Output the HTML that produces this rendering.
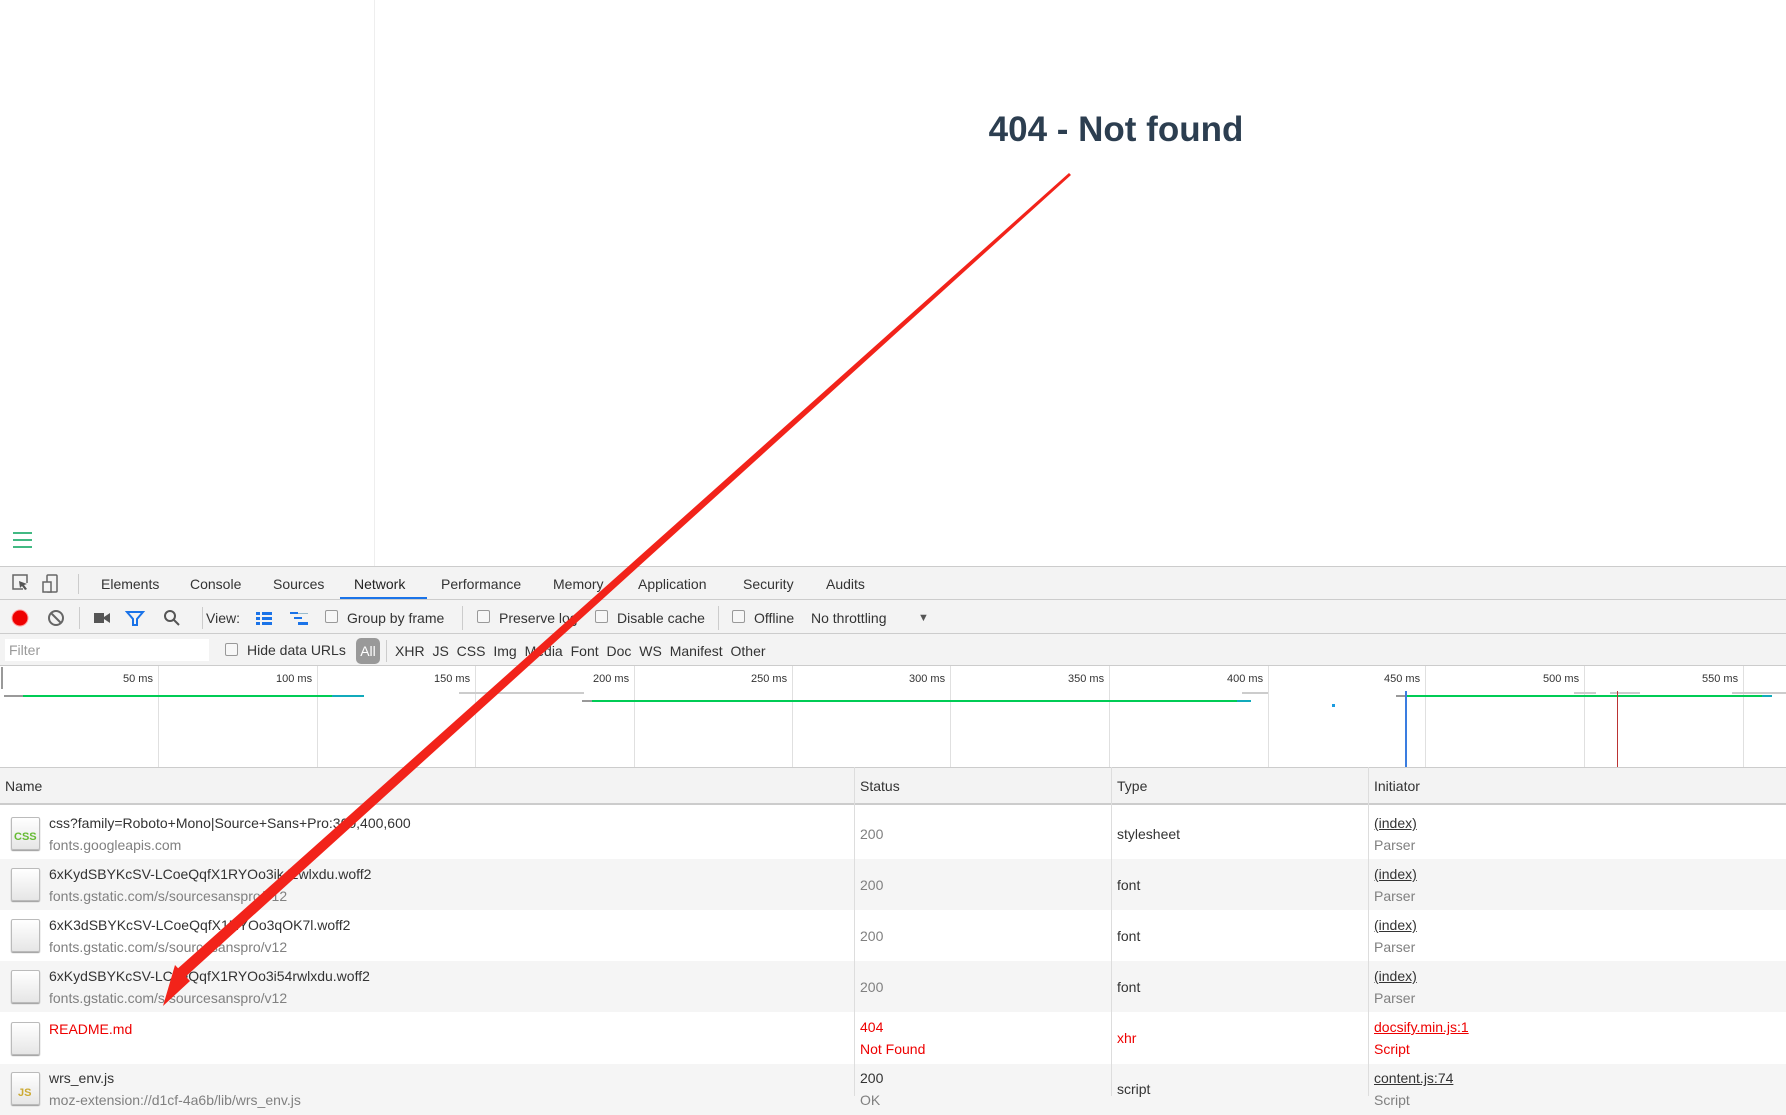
<!DOCTYPE html>
<html><head><meta charset="utf-8"><style>
*{margin:0;padding:0;box-sizing:border-box}
body{width:1786px;height:1096px;overflow:hidden;background:#fff;font-family:"Liberation Sans",sans-serif;position:relative;color:#222}
.a{position:absolute;white-space:nowrap}
.t{font-size:14px;color:#333}
.g{color:#808080}
.r{color:#e00}
.u{text-decoration:underline}
.row{position:absolute;left:0;width:1786px;height:51px}
.ico{position:absolute;left:11px;width:29px;height:33px;border:1px solid #bbb;border-radius:2px;background:linear-gradient(#fff,#e6e6e6);box-shadow:0 1px 1px #999}
.cb{position:absolute;width:13px;height:13px;border:1px solid #999;border-radius:2px;background:#f7f7f7}
.vl{position:absolute;width:1px;background:#e0e0e0}
</style></head><body>
<div class="vl" style="left:374px;top:0;height:566px;background:#eee"></div>
<div class="a" style="left:0;width:2232px;top:110px;font-size:35px;font-weight:bold;color:#2c3e50;text-align:center">404 - Not found</div>
<div class="a" style="left:13px;top:532px;width:19px;height:2px;background:#42b983"></div>
<div class="a" style="left:13px;top:539px;width:19px;height:2px;background:#42b983"></div>
<div class="a" style="left:13px;top:546px;width:19px;height:2px;background:#42b983"></div>

<div class="a" style="left:0;top:566px;width:1786px;height:100px;background:#f3f3f3;border-top:1px solid #ccc"></div>
<div class="a" style="left:0;top:599px;width:1786px;height:1px;background:#ccc"></div>
<div class="a" style="left:0;top:633px;width:1786px;height:1px;background:#ccc"></div>
<div class="a" style="left:0;top:665px;width:1786px;height:1px;background:#ccc"></div>
<svg class="a" style="left:10px;top:572px" width="70" height="24" viewBox="0 0 70 24"><path d="M13 17H3V3h14v8" fill="none" stroke="#666" stroke-width="1.5"/><path d="M9 9l8 3-3 1 3 4-2 1-3-4-2 2z" fill="#555"/><rect x="37" y="3" width="10" height="17" rx="1" fill="none" stroke="#666" stroke-width="1.5"/><rect x="33" y="10" width="8" height="10" fill="#f3f3f3" stroke="#666" stroke-width="1.5"/><rect x="68" y="2" width="1" height="20" fill="#ccc"/></svg>
<div class="a t" style="left:101px;top:576px">Elements</div>
<div class="a t" style="left:190px;top:576px">Console</div>
<div class="a t" style="left:273px;top:576px">Sources</div>
<div class="a t" style="left:354px;top:576px;color:#222">Network</div>
<div class="a" style="left:340px;top:597px;width:87px;height:2px;background:#1a73e8"></div>
<div class="a t" style="left:441px;top:576px">Performance</div>
<div class="a t" style="left:553px;top:576px">Memory</div>
<div class="a t" style="left:638px;top:576px">Application</div>
<div class="a t" style="left:743px;top:576px">Security</div>
<div class="a t" style="left:826px;top:576px">Audits</div>

<svg class="a" style="left:8px;top:605px" width="200" height="26" viewBox="0 0 200 26"><circle cx="12" cy="13" r="8" fill="#e00" stroke="#f99" stroke-width="1"/><circle cx="48" cy="13" r="7" fill="none" stroke="#666" stroke-width="2"/><path d="M43 8l10 10" stroke="#666" stroke-width="2"/><rect x="71" y="2" width="1" height="22" fill="#ccc"/><rect x="86" y="8" width="10" height="10" fill="#555"/><path d="M96 12l6-4v10l-6-4z" fill="#555"/><path d="M119 7h16l-6 7v6h-4v-6z" fill="none" stroke="#1a73e8" stroke-width="2"/><circle cx="162" cy="11" r="5" fill="none" stroke="#555" stroke-width="2"/><path d="M166 15l5 5" stroke="#555" stroke-width="2"/><rect x="194" y="2" width="1" height="22" fill="#ccc"/></svg>
<div class="a t" style="left:206px;top:610px">View:</div>
<svg class="a" style="left:254px;top:610px" width="60" height="18"><rect x="2" y="2" width="4" height="3" fill="#1a73e8"/><rect x="8" y="2" width="10" height="3" fill="#1a73e8"/><rect x="2" y="7" width="4" height="3" fill="#1a73e8"/><rect x="8" y="7" width="10" height="3" fill="#1a73e8"/><rect x="2" y="12" width="4" height="3" fill="#1a73e8"/><rect x="8" y="12" width="10" height="3" fill="#1a73e8"/><rect x="36" y="2" width="8" height="2" fill="#1a73e8"/><rect x="40" y="7" width="8" height="2" fill="#1a73e8"/><rect x="44" y="12" width="10" height="3" fill="#1a73e8"/><rect x="44" y="3" width="10" height="1" fill="#9bc"/></svg>
<div class="cb" style="left:325px;top:610px"></div><div class="a t" style="left:347px;top:610px">Group by frame</div>
<div class="a" style="left:462px;top:606px;width:1px;height:24px;background:#ccc"></div>
<div class="cb" style="left:477px;top:610px"></div><div class="a t" style="left:499px;top:610px">Preserve log</div>
<div class="cb" style="left:595px;top:610px"></div><div class="a t" style="left:617px;top:610px">Disable cache</div>
<div class="a" style="left:718px;top:606px;width:1px;height:24px;background:#ccc"></div>
<div class="cb" style="left:732px;top:610px"></div><div class="a t" style="left:754px;top:610px">Offline</div>
<div class="a t" style="left:811px;top:610px">No throttling</div>
<div class="a" style="left:918px;top:612px;font-size:11px;color:#555">▼</div>

<div class="a" style="left:5px;top:639px;width:204px;height:22px;background:#fff"></div>
<div class="a t" style="left:9px;top:642px;color:#999">Filter</div>
<div class="cb" style="left:225px;top:643px"></div><div class="a t" style="left:247px;top:642px">Hide data URLs</div>
<div class="a" style="left:356px;top:638px;width:24px;height:26px;background:#999;border-radius:5px;color:#fff;font-size:14px;text-align:center;line-height:26px">All</div>
<div class="a" style="left:386px;top:640px;width:1px;height:22px;background:#ccc"></div>
<div class="a t" style="left:395px;top:643px;word-spacing:4px">XHR JS CSS Img Media Font Doc WS Manifest Other</div>

<div class="a" style="left:0;top:666px;width:1786px;height:101px;background:#fff"></div>
<div class="a" style="left:1px;top:667px;width:2px;height:22px;background:#999"></div>
<div class="vl" style="left:158px;top:666px;height:101px"></div>
<div class="vl" style="left:317px;top:666px;height:101px"></div>
<div class="vl" style="left:475px;top:666px;height:101px"></div>
<div class="vl" style="left:634px;top:666px;height:101px"></div>
<div class="vl" style="left:792px;top:666px;height:101px"></div>
<div class="vl" style="left:950px;top:666px;height:101px"></div>
<div class="vl" style="left:1109px;top:666px;height:101px"></div>
<div class="vl" style="left:1268px;top:666px;height:101px"></div>
<div class="vl" style="left:1425px;top:666px;height:101px"></div>
<div class="vl" style="left:1584px;top:666px;height:101px"></div>
<div class="vl" style="left:1743px;top:666px;height:101px"></div>
<div class="a" style="font-size:11px;color:#333;top:673px;left:123px">50 ms</div>
<div class="a" style="font-size:11px;color:#333;top:673px;left:276px">100 ms</div>
<div class="a" style="font-size:11px;color:#333;top:673px;left:434px">150 ms</div>
<div class="a" style="font-size:11px;color:#333;top:673px;left:593px">200 ms</div>
<div class="a" style="font-size:11px;color:#333;top:673px;left:751px">250 ms</div>
<div class="a" style="font-size:11px;color:#333;top:673px;left:909px">300 ms</div>
<div class="a" style="font-size:11px;color:#333;top:673px;left:1068px">350 ms</div>
<div class="a" style="font-size:11px;color:#333;top:673px;left:1227px">400 ms</div>
<div class="a" style="font-size:11px;color:#333;top:673px;left:1384px">450 ms</div>
<div class="a" style="font-size:11px;color:#333;top:673px;left:1543px">500 ms</div>
<div class="a" style="font-size:11px;color:#333;top:673px;left:1702px">550 ms</div>
<div class="a" style="left:4px;top:695px;width:19px;height:2px;background:#999"></div>
<div class="a" style="left:23px;top:695px;width:309px;height:2px;background:#0c5"></div>
<div class="a" style="left:332px;top:695px;width:32px;height:2px;background:#1ab"></div>
<div class="a" style="left:459px;top:692px;width:125px;height:2px;background:#ccc"></div>
<div class="a" style="left:582px;top:700px;width:10px;height:2px;background:#999"></div>
<div class="a" style="left:592px;top:700px;width:656px;height:2px;background:#0c5"></div>
<div class="a" style="left:1237px;top:700px;width:14px;height:2px;background:#1ab"></div>
<div class="a" style="left:1242px;top:692px;width:26px;height:2px;background:#ccc"></div>
<div class="a" style="left:1332px;top:704px;width:3px;height:3px;background:#1a9be0"></div>
<div class="a" style="left:1396px;top:695px;width:10px;height:2px;background:#999"></div>
<div class="a" style="left:1406px;top:695px;width:363px;height:2px;background:#0c5"></div>
<div class="a" style="left:1762px;top:695px;width:10px;height:2px;background:#1ab"></div>
<div class="a" style="left:1574px;top:692px;width:22px;height:2px;background:#ccc"></div>
<div class="a" style="left:1610px;top:692px;width:30px;height:2px;background:#ccc"></div>
<div class="a" style="left:1732px;top:692px;width:54px;height:2px;background:#ccc"></div>
<div class="a" style="left:1405px;top:691px;width:2px;height:76px;background:#3a7de0"></div>
<div class="a" style="left:1617px;top:691px;width:1px;height:76px;background:#b33"></div>

<div class="a" style="left:0;top:767px;width:1786px;height:38px;background:#f3f3f3;border-top:1px solid #ccc;border-bottom:2px solid #ccc"></div>
<div class="a t" style="left:5px;top:778px">Name</div>
<div class="a t" style="left:860px;top:778px">Status</div>
<div class="a t" style="left:1117px;top:778px">Type</div>
<div class="a t" style="left:1374px;top:778px">Initiator</div>

<div class="row" style="top:807px;background:#fff"></div>
<div class="row" style="top:859px;background:#f5f5f5"></div>
<div class="row" style="top:910px;background:#fff"></div>
<div class="row" style="top:961px;background:#f5f5f5"></div>
<div class="row" style="top:1013px;background:#fff"></div>
<div class="row" style="top:1064px;background:#f5f5f5"></div>
<div class="vl" style="left:854px;top:767px;height:329px;background:#ddd"></div>
<div class="vl" style="left:1111px;top:767px;height:329px;background:#ddd"></div>
<div class="vl" style="left:1368px;top:767px;height:329px;background:#ddd"></div>

<div class="ico" style="top:817px"><div style="position:absolute;left:2px;top:13px;font-size:11px;font-weight:bold;color:#6b3">CSS</div></div>
<div class="a t" style="left:49px;top:815px">css?family=Roboto+Mono|Source+Sans+Pro:300,400,600</div>
<div class="a t g" style="left:49px;top:837px">fonts.googleapis.com</div>
<div class="a t g" style="left:860px;top:826px">200</div><div class="a t" style="left:1117px;top:826px">stylesheet</div>
<div class="a t u" style="left:1374px;top:815px">(index)</div><div class="a t g" style="left:1374px;top:837px">Parser</div>

<div class="ico" style="top:868px"></div>
<div class="a t" style="left:49px;top:866px">6xKydSBYKcSV-LCoeQqfX1RYOo3ik4zwlxdu.woff2</div>
<div class="a t g" style="left:49px;top:888px">fonts.gstatic.com/s/sourcesanspro/v12</div>
<div class="a t g" style="left:860px;top:877px">200</div><div class="a t" style="left:1117px;top:877px">font</div>
<div class="a t u" style="left:1374px;top:866px">(index)</div><div class="a t g" style="left:1374px;top:888px">Parser</div>

<div class="ico" style="top:919px"></div>
<div class="a t" style="left:49px;top:917px">6xK3dSBYKcSV-LCoeQqfX1RYOo3qOK7l.woff2</div>
<div class="a t g" style="left:49px;top:939px">fonts.gstatic.com/s/sourcesanspro/v12</div>
<div class="a t g" style="left:860px;top:928px">200</div><div class="a t" style="left:1117px;top:928px">font</div>
<div class="a t u" style="left:1374px;top:917px">(index)</div><div class="a t g" style="left:1374px;top:939px">Parser</div>

<div class="ico" style="top:970px"></div>
<div class="a t" style="left:49px;top:968px">6xKydSBYKcSV-LCoeQqfX1RYOo3i54rwlxdu.woff2</div>
<div class="a t g" style="left:49px;top:990px">fonts.gstatic.com/s/sourcesanspro/v12</div>
<div class="a t g" style="left:860px;top:979px">200</div><div class="a t" style="left:1117px;top:979px">font</div>
<div class="a t u" style="left:1374px;top:968px">(index)</div><div class="a t g" style="left:1374px;top:990px">Parser</div>

<div class="ico" style="top:1022px"></div>
<div class="a t r" style="left:49px;top:1021px">README.md</div>
<div class="a t r" style="left:860px;top:1019px">404</div><div class="a t r" style="left:860px;top:1041px">Not Found</div>
<div class="a t r" style="left:1117px;top:1030px">xhr</div>
<div class="a t r u" style="left:1374px;top:1019px">docsify.min.js:1</div><div class="a t r" style="left:1374px;top:1041px">Script</div>

<div class="ico" style="top:1072px"><div style="position:absolute;left:6px;top:14px;font-size:11px;font-weight:bold;color:#ca3">JS</div></div>
<div class="a t" style="left:49px;top:1070px">wrs_env.js</div>
<div class="a t g" style="left:49px;top:1092px">moz-extension://d1cf-4a6b/lib/wrs_env.js</div>
<div class="a t" style="left:860px;top:1070px">200</div>
<div class="a t g" style="left:860px;top:1092px">OK</div>
<div class="a t" style="left:1117px;top:1081px">script</div>
<div class="a t u" style="left:1374px;top:1070px">content.js:74</div>
<div class="a t g" style="left:1374px;top:1092px">Script</div>

<svg class="a" style="left:0;top:0" width="1786" height="1096"><polygon points="1069,173 1071,175 183,979 175,971" fill="#f2231a"/><polygon points="163,1006 175,965 190,981" fill="#f2231a"/></svg>
</body></html>
